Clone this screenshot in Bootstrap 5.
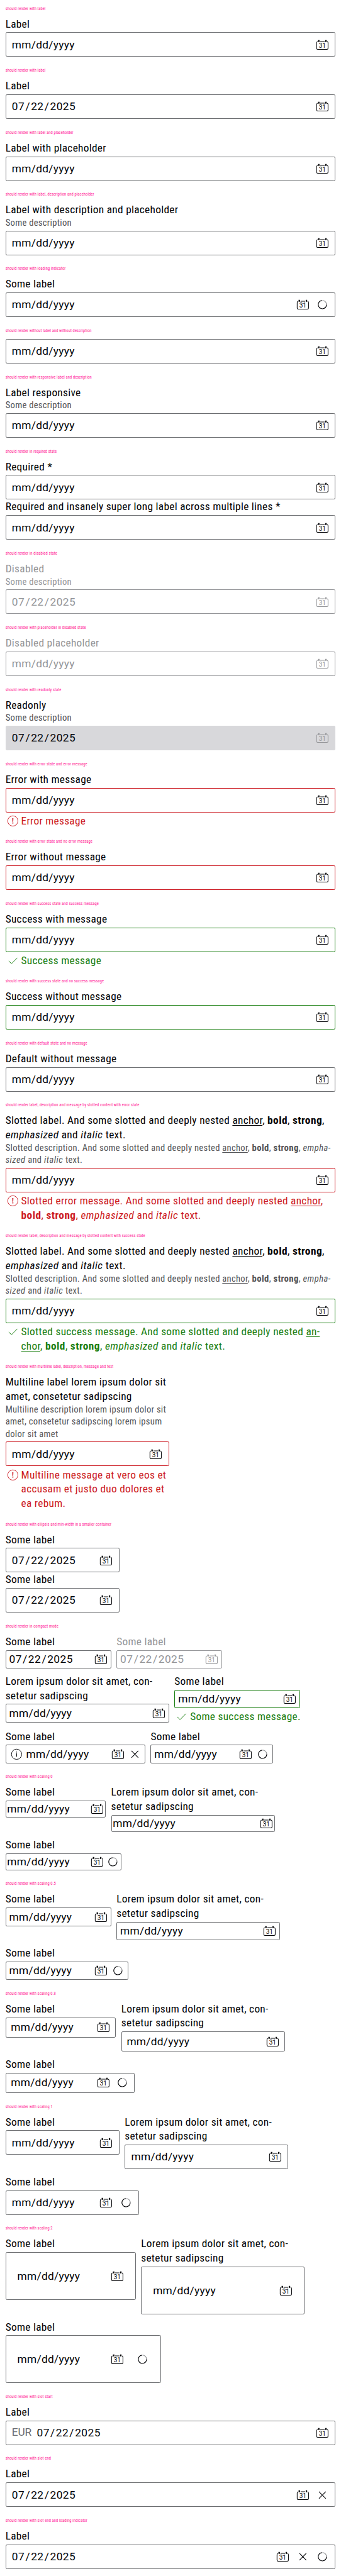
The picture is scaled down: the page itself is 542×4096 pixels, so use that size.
<!DOCTYPE html>
<html lang="en">
<head>
<meta charset="utf-8">
<meta name="viewport" content="width=device-width, initial-scale=1">
<title>Text field date</title>
<link href="https://cdn.jsdelivr.net/npm/bootstrap@5.3.0/dist/css/bootstrap.min.css" rel="stylesheet">
<style>
/* 1rem = 10 design pixels */
html { font-size: 5.4173px; }
body { font-family: "Roboto Condensed", Roboto, "Liberation Sans", sans-serif; color: #010205; background: #fff; }
main { padding: .1rem 1.6rem 0; overflow: hidden; }
.demo { padding-bottom: 1.6rem; }
.demo h2 { height: 4.8rem; line-height: 4.8rem; margin: 0; font-size: 1.2rem; font-weight: 400; color: #ff1493; letter-spacing: .02rem; white-space: nowrap; }
.fld { --s: 1.6rem; --line: #6b6d70; }
.lbl, .msg { font-size: 3.2rem; line-height: 4.2rem; letter-spacing: .053rem; white-space: nowrap; }
.desc { font-size: 2.7rem; line-height: 3.6rem; letter-spacing: .052rem; color: #535457; white-space: nowrap; }
.box { border: 1px solid var(--line); border-radius: .4rem; height: 7.2rem; padding: 0 var(--s) 0 calc(var(--s) + .1rem); gap: var(--s); }
.lbl + .box, .desc + .box { margin-top: .4rem; }
.val { font-family: Roboto, "Liberation Sans", sans-serif; font-size: 3.2rem; line-height: 4.2rem; letter-spacing: .05rem; white-space: nowrap; }
.val b { font-weight: 400; }
.val.num { letter-spacing: .08rem; }
.val.num b { padding: 0 .22rem; }
.unit { font-family: Roboto, "Liberation Sans", sans-serif; font-size: 3.2rem; letter-spacing: -.05rem; color: #6b6d70; }
.ico { width: 4.2rem; height: 4.2rem; flex: none; display: block; }
.msg { margin-top: .4rem; gap: .4rem; }
.err { --line: #cc1922; }
.err .msg { color: #cc1922; }
.ok { --line: #197e10; }
.ok .msg { color: #197e10; }
.off { --line: #949598; }
.off .lbl, .off .desc, .off .box { color: #949598; }
.ro .box { background: #d8d8db; border-color: #d8d8db; }
.ro .ico { color: #949598; }
.fld a { color: inherit; text-decoration: underline; text-decoration-thickness: 1px; text-underline-offset: .3rem; }
.fld strong { font-weight: 700; letter-spacing: .08rem; }
.fld em, .fld i { letter-spacing: .09rem; }
.rows { gap: 1.6rem; }
.half { width: 48rem; }
.cmp { --s: .8rem; }
.cmp .box { height: 5.4rem; }
.s0 { --s: .2rem; }
.s0 .box { height: 5rem; gap: .4rem; }
.s8 { --s: 1.3rem; }
.s8 .box { height: 5.9rem; }
.s2 { --s: 3.2rem; }
.s2 .box { height: 14rem; }
.w294 { width: 29.4rem; } .w310 { width: 31rem; } .w324 { width: 32.4rem; } .w334 { width: 33.4rem; }
.w340 { width: 34rem; } .w360 { width: 36rem; } .w368 { width: 36.8rem; } .w379 { width: 37.9rem; }
.w382 { width: 38.2rem; } .w392 { width: 39.2rem; } .w410 { width: 41rem; } .w456 { width: 45.6rem; }
</style>
</head>
<body>
<svg class="d-none">
  <symbol id="cal" viewBox="0 0 42 42"><g fill="none" stroke="currentColor" stroke-width="1.9" stroke-linecap="round"><path d="M6.2 11.6Q4.3 12.6 4.3 15V31Q4.3 34.1 7.4 34.1H34.6Q37.7 34.1 37.7 31V15Q37.7 12.6 35.8 11.6"/><path d="M15 11.2H27"/></g><path fill="currentColor" d="M8.4 7h4.2v5.4H8.4zM29.4 7h4.2v5.4H29.4z"/><text x="21" y="29.9" text-anchor="middle" font-family="Roboto" font-weight="400" font-size="18.6" fill="currentColor">31</text></symbol>
  <symbol id="x" viewBox="0 0 42 42"><path fill="none" stroke="currentColor" stroke-width="2" d="M11 11 31 31M31 11 11 31"/></symbol>
  <symbol id="spin" viewBox="0 0 42 42"><g fill="none" stroke-width="2.2"><path stroke="#949598" d="M21 8.8A12.2 12.2 0 0 1 33.2 21"/><path stroke="currentColor" d="M33.2 21A12.2 12.2 0 1 1 20 8.85"/></g></symbol>
  <symbol id="info" viewBox="0 0 42 42"><circle cx="21" cy="21" r="15" fill="none" stroke="currentColor" stroke-width="1.7"/><path fill="currentColor" d="M20 18h2v10h-2zM20 13.6h2v2.3h-2z"/></symbol>
  <symbol id="bang" viewBox="0 0 42 42"><circle cx="21" cy="21" r="15" fill="none" stroke="currentColor" stroke-width="1.7"/><path fill="currentColor" d="M19.3 13h3.4l-.5 10.6h-2.4zM19.4 25.6h3.2v3.2h-3.2z"/></symbol>
  <symbol id="tick" viewBox="0 0 42 42"><path fill="none" stroke="currentColor" stroke-width="1.8" d="M9 22.5 17.2 30 34 12.8"/></symbol>
</svg>
<main>
<section class="demo"><h2>should render with label</h2>
<div class="fld"><div class="lbl">Label</div>
<div class="box d-flex align-items-center"><span class="val me-auto">mm<b>/</b>dd<b>/</b>yyyy</span><svg class="ico"><use href="#cal"/></svg></div></div></section>

<section class="demo"><h2>should render with label</h2>
<div class="fld"><div class="lbl">Label</div>
<div class="box d-flex align-items-center"><span class="val num me-auto">07<b>/</b>22<b>/</b>2025</span><svg class="ico"><use href="#cal"/></svg></div></div></section>

<section class="demo"><h2>should render with label and placeholder</h2>
<div class="fld"><div class="lbl">Label with placeholder</div>
<div class="box d-flex align-items-center"><span class="val me-auto">mm<b>/</b>dd<b>/</b>yyyy</span><svg class="ico"><use href="#cal"/></svg></div></div></section>

<section class="demo"><h2>should render with label, description and placeholder</h2>
<div class="fld"><div class="lbl">Label with description and placeholder</div><div class="desc">Some description</div>
<div class="box d-flex align-items-center"><span class="val me-auto">mm<b>/</b>dd<b>/</b>yyyy</span><svg class="ico"><use href="#cal"/></svg></div></div></section>

<section class="demo"><h2>should render with loading indicator</h2>
<div class="fld"><div class="lbl">Some label</div>
<div class="box d-flex align-items-center"><span class="val me-auto">mm<b>/</b>dd<b>/</b>yyyy</span><svg class="ico"><use href="#cal"/></svg><svg class="ico"><use href="#spin"/></svg></div></div></section>

<section class="demo"><h2>should render without label and without description</h2>
<div class="fld">
<div class="box d-flex align-items-center"><span class="val me-auto">mm<b>/</b>dd<b>/</b>yyyy</span><svg class="ico"><use href="#cal"/></svg></div></div></section>

<section class="demo"><h2>should render with responsive label and description</h2>
<div class="fld"><div class="lbl">Label responsive</div><div class="desc">Some description</div>
<div class="box d-flex align-items-center"><span class="val me-auto">mm<b>/</b>dd<b>/</b>yyyy</span><svg class="ico"><use href="#cal"/></svg></div></div></section>

<section class="demo"><h2>should render in required state</h2>
<div class="fld"><div class="lbl">Required *</div>
<div class="box d-flex align-items-center"><span class="val me-auto">mm<b>/</b>dd<b>/</b>yyyy</span><svg class="ico"><use href="#cal"/></svg></div></div>
<div class="fld"><div class="lbl">Required and insanely super long label across multiple lines *</div>
<div class="box d-flex align-items-center"><span class="val me-auto">mm<b>/</b>dd<b>/</b>yyyy</span><svg class="ico"><use href="#cal"/></svg></div></div></section>

<section class="demo"><h2>should render in disabled state</h2>
<div class="fld off"><div class="lbl">Disabled</div><div class="desc">Some description</div>
<div class="box d-flex align-items-center"><span class="val num me-auto">07<b>/</b>22<b>/</b>2025</span><svg class="ico"><use href="#cal"/></svg></div></div></section>

<section class="demo"><h2>should render with placeholder in disabled state</h2>
<div class="fld off"><div class="lbl">Disabled placeholder</div>
<div class="box d-flex align-items-center"><span class="val me-auto">mm<b>/</b>dd<b>/</b>yyyy</span><svg class="ico"><use href="#cal"/></svg></div></div></section>

<section class="demo"><h2>should render with readonly state</h2>
<div class="fld ro"><div class="lbl">Readonly</div><div class="desc">Some description</div>
<div class="box d-flex align-items-center"><span class="val num me-auto">07<b>/</b>22<b>/</b>2025</span><svg class="ico"><use href="#cal"/></svg></div></div></section>

<section class="demo"><h2>should render with error state and error message</h2>
<div class="fld err"><div class="lbl">Error with message</div>
<div class="box d-flex align-items-center"><span class="val me-auto">mm<b>/</b>dd<b>/</b>yyyy</span><svg class="ico"><use href="#cal"/></svg></div>
<div class="msg d-flex"><svg class="ico"><use href="#bang"/></svg><span>Error message</span></div></div></section>

<section class="demo"><h2>should render with error state and no error message</h2>
<div class="fld err"><div class="lbl">Error without message</div>
<div class="box d-flex align-items-center"><span class="val me-auto">mm<b>/</b>dd<b>/</b>yyyy</span><svg class="ico"><use href="#cal"/></svg></div></div></section>

<section class="demo"><h2>should render with success state and success message</h2>
<div class="fld ok"><div class="lbl">Success with message</div>
<div class="box d-flex align-items-center"><span class="val me-auto">mm<b>/</b>dd<b>/</b>yyyy</span><svg class="ico"><use href="#cal"/></svg></div>
<div class="msg d-flex"><svg class="ico"><use href="#tick"/></svg><span>Success message</span></div></div></section>

<section class="demo"><h2>should render with success state and no success message</h2>
<div class="fld ok"><div class="lbl">Success without message</div>
<div class="box d-flex align-items-center"><span class="val me-auto">mm<b>/</b>dd<b>/</b>yyyy</span><svg class="ico"><use href="#cal"/></svg></div></div></section>

<section class="demo"><h2>should render with default state and no message</h2>
<div class="fld"><div class="lbl">Default without message</div>
<div class="box d-flex align-items-center"><span class="val me-auto">mm<b>/</b>dd<b>/</b>yyyy</span><svg class="ico"><use href="#cal"/></svg></div></div></section>

<section class="demo"><h2>should render label, description and message by slotted content with error state</h2>
<div class="fld err"><div class="lbl">Slotted label. And some slotted and deeply nested <a href="#">anchor</a>, <strong>bold</strong>, <strong>strong</strong>,<br><em>emphasized</em> and <i>italic</i> text.</div><div class="desc">Slotted description. And some slotted and deeply nested <a href="#">anchor</a>, <strong>bold</strong>, <strong>strong</strong>, <em>empha-<br>sized</em> and <i>italic</i> text.</div>
<div class="box d-flex align-items-center"><span class="val me-auto">mm<b>/</b>dd<b>/</b>yyyy</span><svg class="ico"><use href="#cal"/></svg></div>
<div class="msg d-flex"><svg class="ico"><use href="#bang"/></svg><span>Slotted error message. And some slotted and deeply nested <a href="#">anchor</a>,<br><strong>bold</strong>, <strong>strong</strong>, <em>emphasized</em> and <i>italic</i> text.</span></div></div></section>

<section class="demo"><h2>should render label, description and message by slotted content with success state</h2>
<div class="fld ok"><div class="lbl">Slotted label. And some slotted and deeply nested <a href="#">anchor</a>, <strong>bold</strong>, <strong>strong</strong>,<br><em>emphasized</em> and <i>italic</i> text.</div><div class="desc">Slotted description. And some slotted and deeply nested <a href="#">anchor</a>, <strong>bold</strong>, <strong>strong</strong>, <em>empha-<br>sized</em> and <i>italic</i> text.</div>
<div class="box d-flex align-items-center"><span class="val me-auto">mm<b>/</b>dd<b>/</b>yyyy</span><svg class="ico"><use href="#cal"/></svg></div>
<div class="msg d-flex"><svg class="ico"><use href="#tick"/></svg><span>Slotted success message. And some slotted and deeply nested <a href="#">an-<br>chor</a>, <strong>bold</strong>, <strong>strong</strong>, <em>emphasized</em> and <i>italic</i> text.</span></div></div></section>

<section class="demo"><h2>should render with multiline label, description, message and text</h2>
<div class="fld err half"><div class="lbl">Multiline label lorem ipsum dolor sit<br>amet, consetetur sadipscing</div><div class="desc">Multiline description lorem ipsum dolor sit<br>amet, consetetur sadipscing lorem ipsum<br>dolor sit amet</div>
<div class="box d-flex align-items-center"><span class="val me-auto">mm<b>/</b>dd<b>/</b>yyyy</span><svg class="ico"><use href="#cal"/></svg></div>
<div class="msg d-flex"><svg class="ico"><use href="#bang"/></svg><span>Multiline message at vero eos et<br>accusam et justo duo dolores et<br>ea rebum.</span></div></div></section>

<section class="demo"><h2>should render with ellipsis and min-width in a smaller container</h2>
<div class="fld w334"><div class="lbl">Some label</div>
<div class="box d-flex align-items-center"><span class="val num me-auto">07<b>/</b>22<b>/</b>2025</span><svg class="ico"><use href="#cal"/></svg></div></div>
<div class="fld w334"><div class="lbl">Some label</div>
<div class="box d-flex align-items-center"><span class="val num me-auto">07<b>/</b>22<b>/</b>2025</span><svg class="ico"><use href="#cal"/></svg></div></div></section>

<section class="demo"><h2>should render in compact mode</h2>
<div class="d-flex flex-column rows">
<div class="d-flex align-items-start rows">
<div class="fld cmp w310"><div class="lbl">Some label</div>
<div class="box d-flex align-items-center"><span class="val num me-auto">07<b>/</b>22<b>/</b>2025</span><svg class="ico"><use href="#cal"/></svg></div></div>
<div class="fld cmp off w310"><div class="lbl">Some label</div>
<div class="box d-flex align-items-center"><span class="val num me-auto">07<b>/</b>22<b>/</b>2025</span><svg class="ico"><use href="#cal"/></svg></div></div></div>
<div class="d-flex align-items-start rows">
<div class="fld cmp half"><div class="lbl">Lorem ipsum dolor sit amet, con-<br>setetur sadipscing</div>
<div class="box d-flex align-items-center"><span class="val me-auto">mm<b>/</b>dd<b>/</b>yyyy</span><svg class="ico"><use href="#cal"/></svg></div></div>
<div class="fld cmp ok w368"><div class="lbl">Some label</div>
<div class="box d-flex align-items-center"><span class="val me-auto">mm<b>/</b>dd<b>/</b>yyyy</span><svg class="ico"><use href="#cal"/></svg></div>
<div class="msg d-flex"><svg class="ico"><use href="#tick"/></svg><span>Some success message.</span></div></div></div>
<div class="d-flex align-items-start rows">
<div class="fld cmp w410"><div class="lbl">Some label</div>
<div class="box d-flex align-items-center"><svg class="ico"><use href="#info"/></svg><span class="val me-auto">mm<b>/</b>dd<b>/</b>yyyy</span><svg class="ico"><use href="#cal"/></svg><svg class="ico"><use href="#x"/></svg></div></div>
<div class="fld cmp w360"><div class="lbl">Some label</div>
<div class="box d-flex align-items-center"><span class="val me-auto">mm<b>/</b>dd<b>/</b>yyyy</span><svg class="ico"><use href="#cal"/></svg><svg class="ico"><use href="#spin"/></svg></div></div></div>
</div></section>

<section class="demo"><h2>should render with scaling 0</h2>
<div class="d-flex flex-column rows">
<div class="d-flex align-items-start rows">
<div class="fld s0 w294"><div class="lbl">Some label</div>
<div class="box d-flex align-items-center"><span class="val me-auto">mm<b>/</b>dd<b>/</b>yyyy</span><svg class="ico"><use href="#cal"/></svg></div></div>
<div class="fld s0 half"><div class="lbl">Lorem ipsum dolor sit amet, con-<br>setetur sadipscing</div>
<div class="box d-flex align-items-center"><span class="val me-auto">mm<b>/</b>dd<b>/</b>yyyy</span><svg class="ico"><use href="#cal"/></svg></div></div></div>
<div class="fld s0 w340"><div class="lbl">Some label</div>
<div class="box d-flex align-items-center"><span class="val me-auto">mm<b>/</b>dd<b>/</b>yyyy</span><svg class="ico"><use href="#cal"/></svg><svg class="ico"><use href="#spin"/></svg></div></div>
</div></section>

<section class="demo"><h2>should render with scaling 0.5</h2>
<div class="d-flex flex-column rows">
<div class="d-flex align-items-start rows">
<div class="fld cmp w310"><div class="lbl">Some label</div>
<div class="box d-flex align-items-center"><span class="val me-auto">mm<b>/</b>dd<b>/</b>yyyy</span><svg class="ico"><use href="#cal"/></svg></div></div>
<div class="fld cmp half"><div class="lbl">Lorem ipsum dolor sit amet, con-<br>setetur sadipscing</div>
<div class="box d-flex align-items-center"><span class="val me-auto">mm<b>/</b>dd<b>/</b>yyyy</span><svg class="ico"><use href="#cal"/></svg></div></div></div>
<div class="fld cmp w360"><div class="lbl">Some label</div>
<div class="box d-flex align-items-center"><span class="val me-auto">mm<b>/</b>dd<b>/</b>yyyy</span><svg class="ico"><use href="#cal"/></svg><svg class="ico"><use href="#spin"/></svg></div></div>
</div></section>

<section class="demo"><h2>should render with scaling 0.8</h2>
<div class="d-flex flex-column rows">
<div class="d-flex align-items-start rows">
<div class="fld s8 w324"><div class="lbl">Some label</div>
<div class="box d-flex align-items-center"><span class="val me-auto">mm<b>/</b>dd<b>/</b>yyyy</span><svg class="ico"><use href="#cal"/></svg></div></div>
<div class="fld s8 half"><div class="lbl">Lorem ipsum dolor sit amet, con-<br>setetur sadipscing</div>
<div class="box d-flex align-items-center"><span class="val me-auto">mm<b>/</b>dd<b>/</b>yyyy</span><svg class="ico"><use href="#cal"/></svg></div></div></div>
<div class="fld s8 w379"><div class="lbl">Some label</div>
<div class="box d-flex align-items-center"><span class="val me-auto">mm<b>/</b>dd<b>/</b>yyyy</span><svg class="ico"><use href="#cal"/></svg><svg class="ico"><use href="#spin"/></svg></div></div>
</div></section>

<section class="demo"><h2>should render with scaling 1</h2>
<div class="d-flex flex-column rows">
<div class="d-flex align-items-start rows">
<div class="fld w334"><div class="lbl">Some label</div>
<div class="box d-flex align-items-center"><span class="val me-auto">mm<b>/</b>dd<b>/</b>yyyy</span><svg class="ico"><use href="#cal"/></svg></div></div>
<div class="fld half"><div class="lbl">Lorem ipsum dolor sit amet, con-<br>setetur sadipscing</div>
<div class="box d-flex align-items-center"><span class="val me-auto">mm<b>/</b>dd<b>/</b>yyyy</span><svg class="ico"><use href="#cal"/></svg></div></div></div>
<div class="fld w392"><div class="lbl">Some label</div>
<div class="box d-flex align-items-center"><span class="val me-auto">mm<b>/</b>dd<b>/</b>yyyy</span><svg class="ico"><use href="#cal"/></svg><svg class="ico"><use href="#spin"/></svg></div></div>
</div></section>

<section class="demo"><h2>should render with scaling 2</h2>
<div class="d-flex flex-column rows">
<div class="d-flex align-items-start rows">
<div class="fld s2 w382"><div class="lbl">Some label</div>
<div class="box d-flex align-items-center"><span class="val me-auto">mm<b>/</b>dd<b>/</b>yyyy</span><svg class="ico"><use href="#cal"/></svg></div></div>
<div class="fld s2 half"><div class="lbl">Lorem ipsum dolor sit amet, con-<br>setetur sadipscing</div>
<div class="box d-flex align-items-center"><span class="val me-auto">mm<b>/</b>dd<b>/</b>yyyy</span><svg class="ico"><use href="#cal"/></svg></div></div></div>
<div class="fld s2 w456"><div class="lbl">Some label</div>
<div class="box d-flex align-items-center"><span class="val me-auto">mm<b>/</b>dd<b>/</b>yyyy</span><svg class="ico"><use href="#cal"/></svg><svg class="ico"><use href="#spin"/></svg></div></div>
</div></section>

<section class="demo"><h2>should render with slot start</h2>
<div class="fld"><div class="lbl">Label</div>
<div class="box d-flex align-items-center"><span class="unit">EUR</span><span class="val num me-auto">07<b>/</b>22<b>/</b>2025</span><svg class="ico"><use href="#cal"/></svg></div></div></section>

<section class="demo"><h2>should render with slot end</h2>
<div class="fld"><div class="lbl">Label</div>
<div class="box d-flex align-items-center"><span class="val num me-auto">07<b>/</b>22<b>/</b>2025</span><svg class="ico"><use href="#cal"/></svg><svg class="ico"><use href="#x"/></svg></div></div></section>

<section class="demo"><h2>should render with slot end and loading indicator</h2>
<div class="fld"><div class="lbl">Label</div>
<div class="box d-flex align-items-center"><span class="val num me-auto">07<b>/</b>22<b>/</b>2025</span><svg class="ico"><use href="#cal"/></svg><svg class="ico"><use href="#x"/></svg><svg class="ico"><use href="#spin"/></svg></div></div></section>
</main>
<script src="https://cdn.jsdelivr.net/npm/bootstrap@5.3.0/dist/js/bootstrap.bundle.min.js"></script>
</body>
</html>
